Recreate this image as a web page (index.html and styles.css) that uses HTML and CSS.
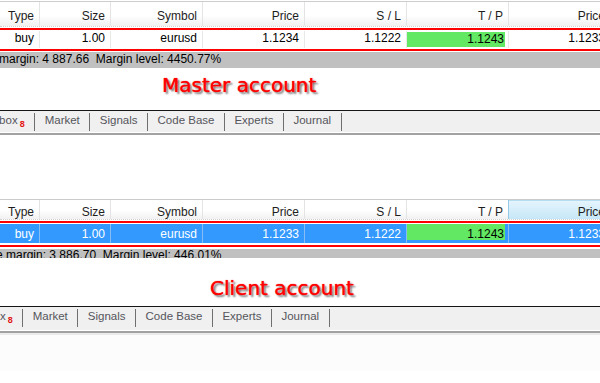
FILE: index.html
```html
<html>
  <head>
    <link rel="stylesheet" href="styles.css">
  </head>
  <body>
    <div class="screen">

      <div class="orders orders-master">
        <div class="row head">
          <div class="cell">Type</div>
          <div class="cell">Size</div>
          <div class="cell">Symbol</div>
          <div class="cell">Price</div>
          <div class="cell">S / L</div>
          <div class="cell">T / P</div>
          <div class="cell">Price</div>
        </div>
        <div class="picked">
          <div class="row line">
            <div class="cell">buy</div>
            <div class="cell">1.00</div>
            <div class="cell">eurusd</div>
            <div class="cell">1.1234</div>
            <div class="cell">1.1222</div>
            <div class="cell tp"><div class="fill">1.1243</div></div>
            <div class="cell">1.1233</div>
          </div>
        </div>
        <div class="status"><span class="status-text">Free margin: 4 887.66  Margin level: 4450.77%</span></div>
      </div>

      <div class="caption">Master account</div>

      <div class="tabs">
        <div class="tab-strip">
          <span class="tab tab-first">Mailbox<span class="count">8</span></span>
          <span class="tab">Market</span>
          <span class="tab">Signals</span>
          <span class="tab">Code Base</span>
          <span class="tab">Experts</span>
          <span class="tab">Journal</span>
        </div>
      </div>

      <div class="orders orders-client">
        <div class="row head">
          <div class="cell">Type</div>
          <div class="cell">Size</div>
          <div class="cell">Symbol</div>
          <div class="cell">Price</div>
          <div class="cell">S / L</div>
          <div class="cell">T / P</div>
          <div class="cell hot">Price</div>
        </div>
        <div class="picked">
          <div class="row line line-blue">
            <div class="cell">buy</div>
            <div class="cell">1.00</div>
            <div class="cell">eurusd</div>
            <div class="cell">1.1233</div>
            <div class="cell">1.1222</div>
            <div class="cell tp"><div class="fill">1.1243</div></div>
            <div class="cell">1.1233</div>
          </div>
        </div>
        <div class="status"><span class="status-text">Free margin: 3 886.70  Margin level: 446.01%</span></div>
      </div>

      <div class="caption caption-client">Client account</div>

      <div class="tabs tabs-client">
        <div class="tab-strip">
          <span class="tab tab-first">Mailbox<span class="count">8</span></span>
          <span class="tab">Market</span>
          <span class="tab">Signals</span>
          <span class="tab">Code Base</span>
          <span class="tab">Experts</span>
          <span class="tab">Journal</span>
        </div>
      </div>
      <div class="foot"></div>

    </div>
  </body>
</html>
```

FILE: styles.css
```css
body {
  margin: 0;
  background: #fff;
  font-family: "Liberation Sans", Arial, sans-serif;
  font-size: 12px;
  color: #000;
}

.screen {
  width: 600px;
  height: 383px;
  overflow: hidden;
}

/* order grid */
.row {
  display: grid;
  grid-template-columns: 40px 71px 92px 102px 102px 102px 102px;
}

.cell {
  box-sizing: border-box;
  padding-right: 5px;
  text-align: right;
  white-space: nowrap;
  line-height: 14px;
  border-right: 1px solid #e4e4e4;
}

.head {
  background: linear-gradient(#fff 55%, #f1f1f1);
  border-bottom: 1px dotted #d2d2d2;
  color: #1e1e1e;
}

.orders-master {
  margin-top: 1px;
  border-top: 1px solid #cdcdcd;
}

.orders-master .head .cell {
  height: 24px;
  padding-top: 7px;
}

.picked {
  margin-top: 1px;
  padding: 1px 0;
  border-top: 2px solid #f00;
  border-bottom: 2px solid #f00;
}

.line .cell {
  border-right-color: #e8e8e8;
}

.orders-master .line .cell {
  height: 17px;
}

.tp {
  padding: 1px 3px 1px 0;
}

.fill {
  box-sizing: border-box;
  height: 100%;
  padding-right: 1px;
  background: #62e862;
  color: #000;
}

.status {
  margin-top: 1px;
  height: 16px;
  overflow: hidden;
  background: #c0c0c0;
  line-height: 14px;
  white-space: pre;
}

.status-text {
  display: block;
  margin-left: -29px;
}

/* client copy */
.orders-client {
  margin-top: 64px;
  border-top: 1px solid #cbcbcb;
}

.orders-client .head .cell {
  height: 19px;
  padding-top: 5px;
}

.orders-client .head .hot {
  background: linear-gradient(#e6f5fd, #c6e7f8);
  box-shadow: -1px 0 0 #96c9e6, inset 0 1px 0 #b5dcf0;
}

.orders-client .picked {
  padding-bottom: 2px;
}

.line-blue {
  background: #3399ff;
  color: #fff;
}

.line-blue .cell {
  height: 19px;
  padding-top: 3px;
  border-right-color: #86bdf5;
}

.line-blue .tp {
  padding: 0 3px 3px 0;
}

.line-blue .fill {
  padding-top: 3px;
}

.orders-client .status {
  margin-top: 2px;
  height: 9px;
}

.orders-client .status-text {
  margin-top: -1px;
  margin-left: -22px;
}

/* labels */
.caption {
  padding: 5px 0 13px 162px;
  font-family: "DejaVu Sans", sans-serif;
  font-size: 20px;
  line-height: 24px;
  color: #f00;
  text-shadow: 0 0 1px #f00, 2px 2px 2px rgba(0, 0, 0, 0.55);
  white-space: nowrap;
}

.caption-client {
  padding: 18px 0 6px 210px;
}

/* terminal tabs */
.tabs {
  height: 22px;
  overflow: hidden;
  background: #f0f0f0;
  border-top: 1px solid #151515;
  border-bottom: 2px solid #a2a2a2;
  box-shadow: inset 0 -1px 0 #fff;
}

.tabs-client {
  height: 24px;
}

.tab-strip {
  display: flex;
  padding-top: 2px;
  margin-left: -22px;
}

.tabs-client .tab-strip {
  margin-left: -34px;
}

.tab {
  padding: 0 9.5px;
  border-right: 1px solid #6f6f6f;
  line-height: 14px;
  font-size: 11.5px;
  color: #55555c;
  white-space: nowrap;
}

.tab-first {
  padding-left: 0;
}

.count {
  margin-left: 2px;
  font-size: 9px;
  font-weight: bold;
  color: #e41414;
  vertical-align: -3px;
}

.foot {
  height: 36px;
  background: #fcfcfc;
  border-top: 2px solid #ebebeb;
}
```
